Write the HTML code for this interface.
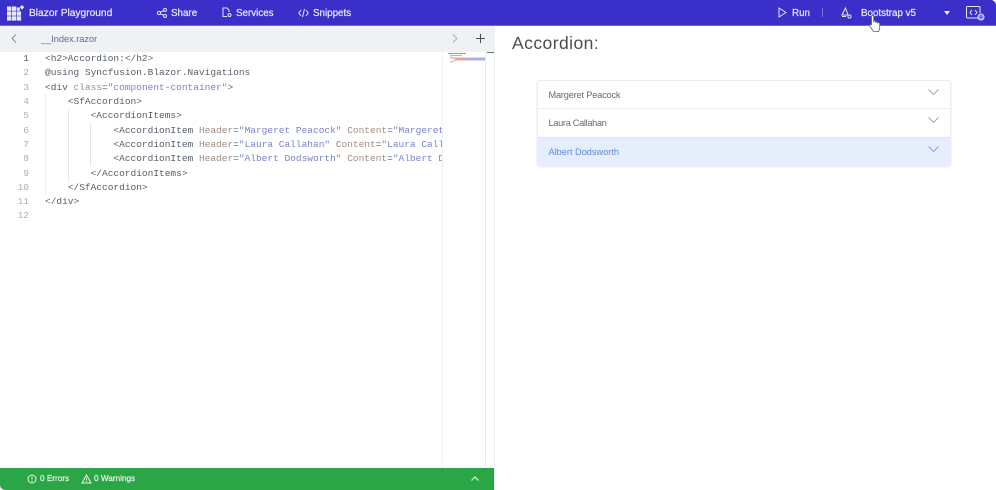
<!DOCTYPE html>
<html lang="en">
<head>
<meta charset="utf-8">
<title>Blazor Playground</title>
<style>
html,body{margin:0;padding:0;width:996px;height:490px;overflow:hidden;background:#fff;font-family:"Liberation Sans",sans-serif}
.abs{position:absolute}
#root{position:relative;width:996px;height:490px;overflow:hidden;background:#fff;filter:blur(.35px)}
#top{left:0;top:0;width:996px;height:25px;background:#3b2fc9;border-bottom:1px solid #6f66da;border-top-right-radius:5px}
.nav{position:absolute;top:7px;height:14px;line-height:14px;font-size:9.8px;color:#e4e5fa;white-space:nowrap;-webkit-text-stroke:.25px #e4e5fa}
svg{position:absolute;overflow:visible}
#tabs{left:0;top:26px;width:494px;height:26px;background:#f0f1f2}
#code{left:45px;top:52px;font:9.5px/14.32px "Liberation Mono",monospace;color:#55606e;white-space:pre;width:397px;overflow:hidden;height:180px}
#nums{left:10px;top:52px;width:19px;text-align:right;font:9.5px/14.32px "Liberation Mono",monospace;color:#a8adb3;white-space:pre}
.a{color:#a08c80}.s{color:#7a82cc}.m{color:#565e68}
.g{position:absolute;width:1px;background:#e3e5e7}
#status{left:0;top:468px;width:494px;height:22px;background:#2aa647;border-bottom-left-radius:5px}
.st{position:absolute;top:473px;height:12px;line-height:12px;font-size:8.2px;color:#e6f5e9;white-space:nowrap;-webkit-text-stroke:.2px #e6f5e9}
#acc{left:537px;top:80px;width:412px;height:84px;border:1px solid #ececf0;border-radius:3px;box-shadow:0 1px 2px rgba(60,60,90,.13);background:#fff;box-sizing:content-box}
.row{position:absolute;left:0;width:412px;font-size:9.2px;color:#666a70;box-sizing:border-box;padding-left:10.5px}
</style>
</head>
<body>
<div id="root">
  <div id="top" class="abs"></div>
  <svg style="left:7px;top:5px" width="18" height="17" viewBox="0 0 18 17" fill="#e8e8fb">
    <rect x="0" y="1.500" width="4.300" height="4.300"/><rect x="4.900" y="1.500" width="4.300" height="4.300"/><rect x="9.800" y="2.500" width="3" height="3.300"/>
    <rect x="0" y="6.400" width="4.300" height="4.300"/><rect x="4.900" y="6.400" width="4.300" height="4.300"/><rect x="9.800" y="6.400" width="4.300" height="4.300"/>
    <rect x="0" y="11.300" width="4.300" height="4.300"/><rect x="4.900" y="11.300" width="4.300" height="4.300"/><rect x="9.800" y="11.300" width="4.300" height="4.300"/>
    <path d="M15 0l2.300 2.300L15 4.600l-2.300-2.300z"/>
  </svg>
  <div class="nav" style="left:29px;top:7px;font-size:10.200px">Blazor Playground</div>

  <svg style="left:157px;top:8px" width="10" height="10" viewBox="0 0 10 10" fill="none" stroke="#e6e6fa" stroke-width="1"><circle cx="2" cy="5" r="1.600"/><circle cx="8" cy="2" r="1.500"/><circle cx="8" cy="8" r="1.500"/><path d="M3.400 4.200L6.600 2.700M3.400 5.800L6.600 7.300"/></svg>
  <div class="nav" style="left:171px">Share</div>
  <svg style="left:222px;top:7px" width="10" height="11" viewBox="0 0 10 11" fill="none" stroke="#e6e6fa" stroke-width="1"><path d="M5 9.500H1V1h4l2 2v2"/><circle cx="7.500" cy="8" r="1.500"/></svg>
  <div class="nav" style="left:236px">Services</div>
  <svg style="left:298px;top:8px" width="11" height="10" viewBox="0 0 11 10" fill="none" stroke="#e6e6fa" stroke-width="1"><path d="M3 2L.8 5 3 8M8 2l2.200 3L8 8M6.500 1L4.500 9"/></svg>
  <div class="nav" style="left:313px">Snippets</div>

  <svg style="left:778px;top:7px" width="9" height="11" viewBox="0 0 9 11" fill="none" stroke="#e6e6fa" stroke-width="1"><path d="M1 1l7 4.500L1 10z"/></svg>
  <div class="nav" style="left:792px">Run</div>
  <div class="abs" style="left:822px;top:8px;width:1px;height:9px;background:#7a72dc"></div>
  <svg style="left:841px;top:7px" width="11" height="12" viewBox="0 0 11 12" fill="none" stroke="#e6e6fa" stroke-width="1"><path d="M4.500 1L1 8h6zM1 9.500h4"/><circle cx="8.500" cy="9.500" r="1.600"/></svg>
  <div class="nav" style="left:861px">Bootstrap v5</div>
  <div class="abs" style="left:944px;top:11px;width:0;height:0;border-left:3.500px solid transparent;border-right:3.500px solid transparent;border-top:4px solid #f0f0fc"></div>
  <svg style="left:966px;top:6px" width="19" height="15" viewBox="0 0 19 15" fill="none" stroke="#e6e6fa" stroke-width="1"><path d="M12 12H1.500a1 1 0 0 1-1-1V1.500a1 1 0 0 1 1-1H13a1 1 0 0 1 1 1V7"/><path d="M6 4L4 6.500 6 9M9 4l2 2.500L9 9"/><circle cx="15" cy="11" r="3" fill="#7f7ae0"/></svg>

  <div id="tabs" class="abs"></div>
  <svg style="left:11px;top:34px" width="6" height="9" viewBox="0 0 6 9" fill="none" stroke="#8a9096" stroke-width="1"><path d="M5 .5L1 4.500l4 4"/></svg>
  <div class="abs" style="left:41px;top:33px;font-size:9.200px;line-height:12px;color:#5f6a9c">__Index.razor</div>
  <svg style="left:452px;top:34px" width="6" height="9" viewBox="0 0 6 9" fill="none" stroke="#a8adb2" stroke-width="1"><path d="M1 .5l4 4-4 4"/></svg>
  <svg style="left:476px;top:34px" width="9" height="9" viewBox="0 0 9 9" fill="none" stroke="#4a4f55" stroke-width="1.100"><path d="M4.500 0v9M0 4.500h9"/></svg>

  <div id="nums" class="abs"><span style="color:#555c64">1</span>
2
3
4
5
6
7
8
9
10
11
12</div>
  <div class="g" style="left:45px;top:95px;height:100px;background:#eceef0"></div>
  <div class="g" style="left:68px;top:109px;height:72px"></div>
  <div class="g" style="left:90px;top:123px;height:43px"></div>
  <div id="code" class="abs"><span class="m">&lt;h2&gt;Accordion:&lt;/h2&gt;</span>
<span class="m">@using Syncfusion.Blazor.Navigations</span>
<span class="m">&lt;div</span> <span class="a">class</span>=<span class="s">"component-container"</span><span class="m">&gt;</span>
    <span class="m">&lt;SfAccordion&gt;</span>
        <span class="m">&lt;AccordionItems&gt;</span>
            <span class="m">&lt;AccordionItem</span> <span class="a">Header</span>=<span class="s">"Margeret Peacock"</span> <span class="a">Content</span>=<span class="s">"Margeret Peacock"</span>
            <span class="m">&lt;AccordionItem</span> <span class="a">Header</span>=<span class="s">"Laura Callahan"</span> <span class="a">Content</span>=<span class="s">"Laura Callahan"</span>
            <span class="m">&lt;AccordionItem</span> <span class="a">Header</span>=<span class="s">"Albert Dodsworth"</span> <span class="a">Content</span>=<span class="s">"Albert Dodsworth"</span>
        <span class="m">&lt;/AccordionItems&gt;</span>
    <span class="m">&lt;/SfAccordion&gt;</span>
<span class="m">&lt;/div&gt;</span></div>

  <div class="abs" style="left:442px;top:52px;width:1px;height:416px;background:#f0f1f3"></div>
  <div class="abs" style="left:485px;top:52px;width:1px;height:416px;background:#e8e9eb"></div>
  <div class="abs" style="left:487px;top:52px;width:7px;height:1px;background:#6b7075"></div>
  <svg style="left:447px;top:52px" width="38" height="12" viewBox="0 0 38 12" fill="none">
    <path d="M1 1.500h18" stroke="#a0a4aa" stroke-width="1.200"/>
    <path d="M3 3.500h12" stroke="#b8bbc0" stroke-width="1"/>
    <path d="M3 5l5 1.500" stroke="#d8b0a0" stroke-width="1.200"/>
    <path d="M8 7h11" stroke="#e0a890" stroke-width="3"/>
    <path d="M19 7h19" stroke="#aab0dc" stroke-width="3"/>
    <path d="M3 10.500l6-2.500" stroke="#e0b8a8" stroke-width="1.200"/>
  </svg>
  <div class="abs" style="left:494px;top:26px;width:1px;height:464px;background:#eff0f2"></div>

  <div id="status" class="abs"></div>
  <svg style="left:27px;top:474px" width="10" height="10" viewBox="0 0 10 10" fill="none" stroke="#e6f5e9" stroke-width="1"><circle cx="5" cy="5" r="4"/><path d="M5 2.500v3M5 6.500v1"/></svg>
  <div class="st" style="left:40px">0 Errors</div>
  <svg style="left:81px;top:474px" width="11" height="10" viewBox="0 0 11 10" fill="none" stroke="#e6f5e9" stroke-width="1"><path d="M5.500 1L10 9H1zM5.500 4v2.500M5.500 7.200v.8"/></svg>
  <div class="st" style="left:94px">0 Warnings</div>
  <svg style="left:471px;top:476px" width="8" height="5" viewBox="0 0 8 5" fill="none" stroke="#e6f5e9" stroke-width="1.200"><path d="M.5 4.500L4 1l3.500 3.500"/></svg>

  <div class="abs" style="left:512px;top:32px;font-size:17.500px;line-height:22px;color:#4a4d53;letter-spacing:.45px">Accordion:</div>

  <div id="acc" class="abs">
    <div class="row" style="top:0;height:28px;line-height:29px;border-bottom:1px solid #efeff3;letter-spacing:-.17px">Margeret Peacock</div>
    <div class="row" style="top:28px;height:29px;line-height:29px;border-bottom:1px solid #e6e6f0;letter-spacing:-.3px">Laura Callahan</div>
    <div class="row" style="top:57px;height:27px;line-height:28px;background:#e5effc;color:#5b8ad6">Albert Dodsworth</div>
  </div>
  <svg style="left:928px;top:89px" width="11" height="6" viewBox="0 0 11 6" fill="none" stroke="#9a9ea6" stroke-width=".9"><path d="M.5.500l5 5 5-5"/></svg>
  <svg style="left:928px;top:117px" width="11" height="6" viewBox="0 0 11 6" fill="none" stroke="#9a9ea6" stroke-width=".9"><path d="M.5.500l5 5 5-5"/></svg>
  <svg style="left:928px;top:146px" width="11" height="6" viewBox="0 0 11 6" fill="none" stroke="#8f9ad8" stroke-width=".9"><path d="M.5.500l5 5 5-5"/></svg>

  <svg style="left:869px;top:15px" width="13" height="18" viewBox="0 0 13 18" fill="#fff" stroke="#5a5d63" stroke-width=".8"><path d="M2.500 1.500a1.100 1.100 0 0 1 2.200 0V7.500V6.800a1 1 0 0 1 2 0v1a1 1 0 0 1 2 0v.7a1 1 0 0 1 2 0V13l-1 3.500H4.500L.8 11a1.100 1.100 0 0 1 1.700-1.300z"/></svg>
</div>
</body>
</html>
